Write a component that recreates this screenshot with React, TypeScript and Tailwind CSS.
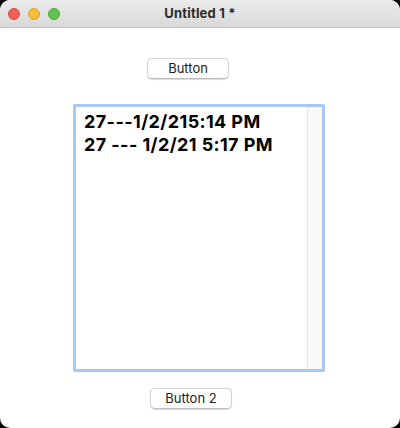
import React from 'react';

const App: React.FC = () => {
    return (
        <div className="w-[400px] h-[428px] bg-black" style={{ fontFamily: 'Inter, "Liberation Sans", sans-serif' }}>
            <div className="w-full h-full bg-white rounded-[10px] overflow-hidden flex flex-col">
                {/* Title bar */}
                <div className="relative h-[28px] shrink-0 bg-gradient-to-b from-[#ebebeb] to-[#d9d9d9] border-b border-[#c4c4c4] flex items-center justify-center">
                    <div className="absolute left-[8px] top-[8px] flex gap-[8px]">
                        <div className="w-[12px] h-[12px] rounded-full bg-[#ed5f57] border border-[#d54a43]" />
                        <div className="w-[12px] h-[12px] rounded-full bg-[#f5bd3a] border border-[#daa22d]" />
                        <div className="w-[12px] h-[12px] rounded-full bg-[#61c454] border border-[#4ea93f]" />
                    </div>
                    <span className="text-[13px] font-bold text-[#2a2a2a] tracking-[0.2px]">Untitled 1 *</span>
                </div>

                {/* Content */}
                <div className="flex-1 flex flex-col">
                    <button className="self-start ml-[147px] mt-[30px] w-[82px] h-[21px] rounded-[5px] bg-white border border-[#d4d4d4] border-b-[#bcbcbc] shadow-[0_0.5px_1px_rgba(0,0,0,0.15)] text-[13px] text-[#222] leading-none">
                        Button
                    </button>

                    <div className="self-start ml-[73px] mt-[25px] w-[252px] h-[268px] rounded-[2px] border-[3px] border-[#a8c6f7] bg-white flex">
                        <div className="flex-1 pt-[3px] pl-[8px] text-[18px] font-bold text-black leading-[23px] tracking-[0.4px]">
                            <div>27---1/2/215:14 PM</div>
                            <div>27 --- 1/2/21 5:17 PM</div>
                        </div>
                        <div className="w-[15px] bg-[#f8f8f8] border-l border-[#e6e6e6]" />
                    </div>

                    <button className="self-start ml-[150px] mt-[16px] w-[82px] h-[21px] rounded-[5px] bg-white border border-[#d4d4d4] border-b-[#bcbcbc] shadow-[0_0.5px_1px_rgba(0,0,0,0.15)] text-[13px] text-[#222] leading-none">
                        Button 2
                    </button>
                </div>
            </div>
        </div>
    );
};

export default App;
